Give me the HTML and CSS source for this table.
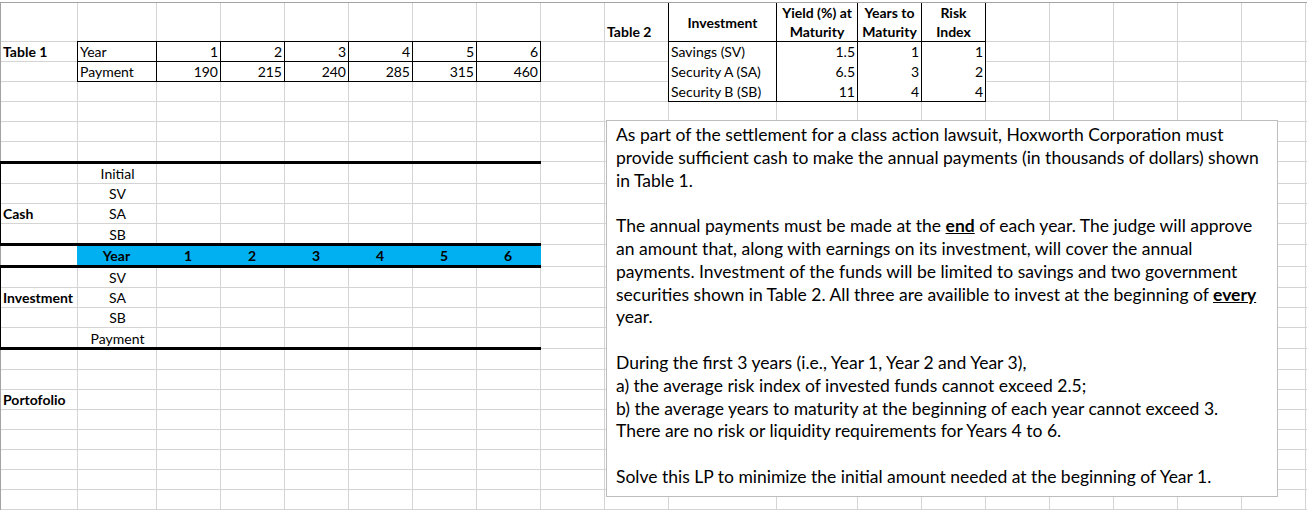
FILE: index.html
```html
<!DOCTYPE html>
<html lang="en">
<head>
<meta charset="utf-8">
<title>Hoxworth Corporation – LP</title>
<link rel="stylesheet" href="styles.css">
</head>
<body>
<div class="page">
  <div class="sheet">
    <div class="cell lbl-a r2">Table 1</div>
    <div class="t1">
      <div class="t1-c txt">Year</div>
      <div class="t1-c num">1</div>
      <div class="t1-c num">2</div>
      <div class="t1-c num">3</div>
      <div class="t1-c num">4</div>
      <div class="t1-c num">5</div>
      <div class="t1-c num">6</div>
      <div class="t1-c txt">Payment</div>
      <div class="t1-c num">190</div>
      <div class="t1-c num">215</div>
      <div class="t1-c num">240</div>
      <div class="t1-c num">285</div>
      <div class="t1-c num">315</div>
      <div class="t1-c num">460</div>
    </div>

    <div class="cell lbl-j r1">Table 2</div>
    <div class="t2">
      <div class="t2-h">Investment</div>
      <div class="t2-h">Yield (%) at<br>Maturity</div>
      <div class="t2-h">Years to<br>Maturity</div>
      <div class="t2-h">Risk<br>Index</div>
      <div class="t2-c txt">Savings (SV)</div>
      <div class="t2-c num">1.5</div>
      <div class="t2-c num">1</div>
      <div class="t2-c num">1</div>
      <div class="t2-c txt">Security A (SA)</div>
      <div class="t2-c num">6.5</div>
      <div class="t2-c num">3</div>
      <div class="t2-c num">2</div>
      <div class="t2-c txt">Security B (SB)</div>
      <div class="t2-c num">11</div>
      <div class="t2-c num">4</div>
      <div class="t2-c num">4</div>
    </div>

    <div class="block cash"></div>
    <div class="year-row">
      <span></span>
      <span>Year</span>
      <span>1</span>
      <span>2</span>
      <span>3</span>
      <span>4</span>
      <span>5</span>
      <span>6</span>
    </div>
    <div class="block invest"></div>

    <div class="cell lbl-b r8">Initial</div>
    <div class="cell lbl-b r9">SV</div>
    <div class="cell lbl-a r10">Cash</div>
    <div class="cell lbl-b r10">SA</div>
    <div class="cell lbl-b r11">SB</div>
    <div class="cell lbl-b r13">SV</div>
    <div class="cell lbl-a r14">Investment</div>
    <div class="cell lbl-b r14">SA</div>
    <div class="cell lbl-b r15">SB</div>
    <div class="cell lbl-b r16">Payment</div>
    <div class="cell lbl-a r19">Portofolio</div>
  </div>

  <div class="note">
    <p>As part of the settlement for a class action lawsuit, Hoxworth Corporation must<br>provide sufficient cash to make the annual payments (in thousands of dollars) shown<br>in Table 1.</p>
    <p>The annual payments must be made at the <b>end</b> of each year. The judge will approve<br>an amount that, along with earnings on its investment, will cover the annual<br>payments. Investment of the funds will be limited to savings and two government<br>securities shown in Table 2. All three are availible to invest at the beginning of <b>every</b><br>year.</p>
    <p>During the first 3 years (i.e., Year 1, Year 2 and Year 3),<br>a) the average risk index of invested funds cannot exceed 2.5;<br>b) the average years to maturity at the beginning of each year cannot exceed 3.<br>There are no risk or liquidity requirements for Years 4 to 6.</p>
    <p>Solve this LP to minimize the initial amount needed at the beginning of Year 1.</p>
  </div>
</div>
</body>
</html>
```

FILE: styles.css
```css
:root {
  --grid: #d4d4d4;
  --edge: #a3a3a3;
  --ink: #000;
  --blue: #00b0f0;
}

* { box-sizing: border-box; }

html, body {
  margin: 0;
  background: #fff;
}

body {
  width: 1307px;
  height: 510px;
  overflow: hidden;
  font-family: Lato, "Liberation Sans", sans-serif;
  color: var(--ink);
}

.page {
  position: relative;
  width: 1307px;
  height: 510px;
}

/* ---------- worksheet grid ---------- */
.sheet {
  margin-top: 2px;
  border-top: 1px solid var(--edge);
  border-left: 1px solid var(--edge);
  display: grid;
  grid-template-columns: 77px 79px repeat(8, 64px) 108px 81px repeat(7, 64px) 1fr;
  grid-template-rows: 39px repeat(6, 20px) 22px 20px 20px 21px 22px 21px 20px 20px 21px 21px repeat(7, 20px);
  font-size: 14px;
  background-image:
    linear-gradient(90deg,
      transparent 76px, var(--grid) 76px 77px,
      transparent 77px 155px, var(--grid) 155px 156px,
      transparent 156px 219px, var(--grid) 219px 220px,
      transparent 220px 283px, var(--grid) 283px 284px,
      transparent 284px 347px, var(--grid) 347px 348px,
      transparent 348px 411px, var(--grid) 411px 412px,
      transparent 412px 475px, var(--grid) 475px 476px,
      transparent 476px 539px, var(--grid) 539px 540px,
      transparent 540px 603px, var(--grid) 603px 604px,
      transparent 604px 667px, var(--grid) 667px 668px,
      transparent 668px 775px, var(--grid) 775px 776px,
      transparent 776px 856px, var(--grid) 856px 857px,
      transparent 857px 920px, var(--grid) 920px 921px,
      transparent 921px 984px, var(--grid) 984px 985px,
      transparent 985px 1048px, var(--grid) 1048px 1049px,
      transparent 1049px 1112px, var(--grid) 1112px 1113px,
      transparent 1113px 1176px, var(--grid) 1176px 1177px,
      transparent 1177px 1240px, var(--grid) 1240px 1241px,
      transparent 1241px 1304px, var(--grid) 1304px 1305px,
      transparent 1305px),
    linear-gradient(180deg,
      transparent 38px, var(--grid) 38px 39px,
      transparent 39px 58px, var(--grid) 58px 59px,
      transparent 59px 78px, var(--grid) 78px 79px,
      transparent 79px 98px, var(--grid) 98px 99px,
      transparent 99px 118px, var(--grid) 118px 119px,
      transparent 119px 138px, var(--grid) 138px 139px,
      transparent 139px 158px, var(--grid) 158px 159px,
      transparent 159px 180px, var(--grid) 180px 181px,
      transparent 181px 200px, var(--grid) 200px 201px,
      transparent 201px 220px, var(--grid) 220px 221px,
      transparent 221px 241px, var(--grid) 241px 242px,
      transparent 242px 263px, var(--grid) 263px 264px,
      transparent 264px 284px, var(--grid) 284px 285px,
      transparent 285px 304px, var(--grid) 304px 305px,
      transparent 305px 324px, var(--grid) 324px 325px,
      transparent 325px 345px, var(--grid) 345px 346px,
      transparent 346px 366px, var(--grid) 366px 367px,
      transparent 367px 386px, var(--grid) 386px 387px,
      transparent 387px 406px, var(--grid) 406px 407px,
      transparent 407px 426px, var(--grid) 426px 427px,
      transparent 427px 446px, var(--grid) 446px 447px,
      transparent 447px 466px, var(--grid) 466px 467px,
      transparent 467px 486px, var(--grid) 486px 487px,
      transparent 487px 506px, var(--grid) 506px 507px,
      transparent 507px);
}

/* plain cells */
.cell {
  display: flex;
  align-items: flex-end;
  padding: 0 2px 2px;
  white-space: nowrap;
  min-width: 0;
}
.lbl-a { grid-column: 1; font-weight: 700; }
.lbl-b { grid-column: 2; justify-content: center; }
.lbl-j { grid-column: 10; font-weight: 700; }

.r1 { grid-row: 1; }
.r2 { grid-row: 2; }
.r8 { grid-row: 8; }
.r9 { grid-row: 9; }
.r10 { grid-row: 10; }
.r11 { grid-row: 11; }
.r13 { grid-row: 13; }
.r14 { grid-row: 14; }
.r15 { grid-row: 15; }
.r16 { grid-row: 16; }
.r19 { grid-row: 19; }

.num { justify-content: flex-end; }

/* ---------- Table 1 ---------- */
.t1 {
  grid-column: 2 / 9;
  grid-row: 2 / 4;
  margin: -1px 0 0 -1px;
  border-left: 1px solid var(--ink);
  border-top: 1px solid var(--ink);
  display: grid;
  grid-template-columns: 79px repeat(6, 64px);
  grid-template-rows: 20px 20px;
}
.t1-c {
  display: flex;
  align-items: flex-end;
  padding: 0 2px 1px;
  border-right: 1px solid var(--ink);
  border-bottom: 1px solid var(--ink);
  white-space: nowrap;
}

/* ---------- Table 2 ---------- */
.t2 {
  grid-column: 11 / 15;
  grid-row: 1 / 5;
  margin-left: -1px;
  border-left: 1px solid var(--ink);
  background: #fff;
  display: grid;
  grid-template-columns: 108px 81px 64px 64px;
  grid-template-rows: 39px 20px 20px 20px;
}
.t2-h {
  display: flex;
  align-items: center;
  justify-content: center;
  text-align: center;
  font-weight: 700;
  line-height: 19px;
  border-right: 1px solid var(--ink);
  border-bottom: 1px solid var(--ink);
}
.t2-c {
  display: flex;
  align-items: flex-end;
  padding: 0 2px 2px;
  border-right: 1px solid var(--ink);
  white-space: nowrap;
}
.t2 > :nth-last-child(-n+4) {
  border-bottom: 1px solid var(--ink);
  padding-bottom: 1px;
}

/* ---------- Cash / Investment blocks ---------- */
.cash {
  grid-column: 1 / 9;
  grid-row: 8 / 12;
  margin: -1px 0 0 -1px;
  border-top: 3px solid var(--ink);
  border-left: 1px solid var(--ink);
}
.invest {
  grid-column: 1 / 9;
  grid-row: 13 / 17;
  margin: 0 0 -1px -1px;
  border-left: 1px solid var(--ink);
  border-bottom: 3px solid var(--ink);
}
.year-row {
  grid-column: 1 / 9;
  grid-row: 12;
  margin: -2px 0 -1px -1px;
  border-top: 3px solid var(--ink);
  border-bottom: 3px solid var(--ink);
  background: linear-gradient(90deg, var(--edge) 0 1px, #fff 1px 77px, var(--blue) 77px);
  display: grid;
  grid-template-columns: 77px 79px repeat(6, 64px);
  font-weight: 700;
}
.year-row > span {
  display: flex;
  align-items: flex-end;
  justify-content: center;
  padding-bottom: 1px;
}

/* ---------- text box ---------- */
.note {
  position: absolute;
  left: 606px;
  top: 118px;
  width: 672px;
  height: 377px;
  border: 1px solid #bdbdbd;
  background: #fff;
  padding: 3px 9px 0;
  font-size: 17.5px;
  line-height: 22.8px;
}
.note p {
  margin: 0 0 22.8px;
  white-space: nowrap;
}
.note b {
  text-decoration: underline;
}
```
